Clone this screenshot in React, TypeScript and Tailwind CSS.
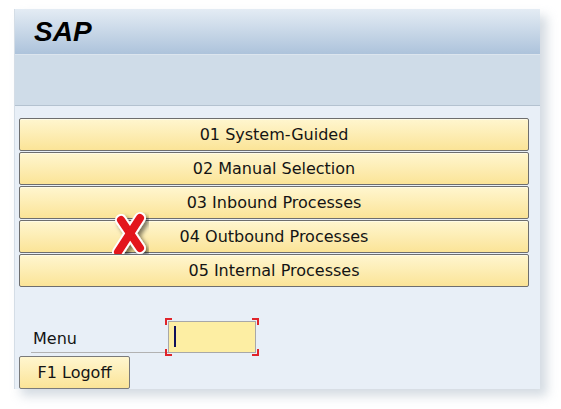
import React from "react";

const items = [
  "01 System-Guided",
  "02 Manual Selection",
  "03 Inbound Processes",
  "04 Outbound Processes",
  "05 Internal Processes",
];

function RedCross() {
  return (
    <svg width="44" height="48" viewBox="0 0 44 48" className="absolute left-[89px] top-[-9px]">
      <defs>
        <filter id="sh" x="-30%" y="-30%" width="170%" height="170%">
          <feDropShadow dx="3" dy="3" stdDeviation="2" floodColor="#000" floodOpacity="0.5" />
        </filter>
      </defs>
      <g filter="url(#sh)" strokeLinecap="round">
        <path d="M12 8 L31 36" stroke="#fff" strokeWidth="12" />
        <path d="M31 6 L9 40" stroke="#fff" strokeWidth="12" />
        <path d="M12 8 L31 36" stroke="#e3121a" strokeWidth="8" />
        <path d="M31 6 L9 40" stroke="#e3121a" strokeWidth="8" />
      </g>
    </svg>
  );
}

function MenuButton({ label, cross }: { label: string; cross?: boolean }) {
  return (
    <div className="relative h-[33px] w-[510px] rounded-[2px] border border-[#6e6e6e] bg-gradient-to-b from-[#fff6cf] to-[#fbe497] shadow-[inset_0_1px_0_#fffbe6] flex items-center justify-center text-[16px] text-[#141414]">
      {cross && <RedCross />}
      <span className="relative">{label}</span>
    </div>
  );
}

export default function App() {
  return (
    <div className="w-[561px] h-[409px] bg-white pl-[14px] pt-[9px]" style={{ fontFamily: '"DejaVu Sans", sans-serif' }}>
      <div className="w-[526px] h-[380px] bg-[#e8eff7] shadow-[7px_7px_10px_rgba(160,175,190,0.45)] flex flex-col border-l border-[#d4dde6]">
        <div className="h-[46px] bg-gradient-to-b from-[#e4ecf4] to-[#adc3db] flex items-center pl-[19px] border-b border-[#dce5ee]">
          <span
            className="text-[28px] font-bold italic text-black"
            style={{ fontFamily: '"Liberation Sans", Arial, sans-serif' }}
          >
            SAP
          </span>
        </div>
        <div className="h-[51px] bg-[#cfdce8] border-b border-[#b4c2d0]" />
        <div className="pt-[12px] pl-[4px] flex flex-col gap-[1px]">
          {items.map((it, i) => (
            <MenuButton key={it} label={it} cross={i === 3} />
          ))}
        </div>
        <div className="mt-[34px] pl-[16px] flex items-end">
          <div className="w-[137px] h-[32px] border-b border-[#b2b2b2] text-[16px] text-[#141414] pl-[2px] pt-[6px]">
            Menu
          </div>
          <div className="relative w-[88px] h-[32px] border border-[#a8a8a8] bg-[#fdeea3]">
            <div className="absolute left-[5px] top-[4px] w-[2px] h-[21px] bg-[#10105a]" />
            <div className="absolute -left-[4px] -top-[4px] w-[7px] h-[7px] border-l-2 border-t-2 border-[#e0242b]" />
            <div className="absolute -right-[4px] -top-[4px] w-[7px] h-[7px] border-r-2 border-t-2 border-[#e0242b]" />
            <div className="absolute -left-[4px] -bottom-[4px] w-[7px] h-[7px] border-l-2 border-b-2 border-[#e0242b]" />
            <div className="absolute -right-[4px] -bottom-[4px] w-[7px] h-[7px] border-r-2 border-b-2 border-[#e0242b]" />
          </div>
        </div>
        <div className="pl-[4px] mt-[3px]">
          <div className="w-[111px] h-[33px] rounded-[2px] border border-[#7a7a7a] bg-gradient-to-b from-[#fff6cf] to-[#fbe497] flex items-center justify-center text-[16px] text-[#141414]">
            F1 Logoff
          </div>
        </div>
      </div>
    </div>
  );
}
